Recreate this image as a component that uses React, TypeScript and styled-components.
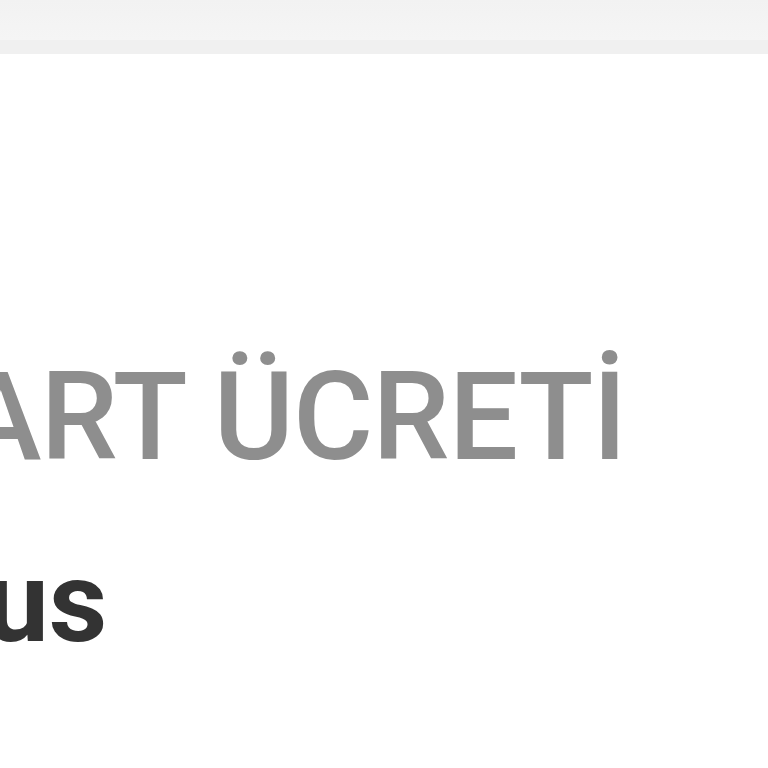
import styled, { createGlobalStyle } from "styled-components";

const GlobalStyle = createGlobalStyle`
    html, body {
        margin: 0;
        padding: 0;
        background: #ffffff;
        overflow: hidden;
    }
    body {
        font-family: Roboto, "Liberation Sans", Arial, sans-serif;
    }
`;

const Page = styled.div`
    width: 768px;
    height: 768px;
    display: flex;
    flex-direction: column;
    overflow: hidden;
`;

const TopBar = styled.div`
    height: 40px;
    background: linear-gradient(#f2f2f2, #f5f5f5);
    border-bottom: 14px solid #f0f0f0;
`;

const Content = styled.div`
    display: flex;
    flex-direction: column;
    padding-top: 302px;
    margin-left: -40px;
`;

const Label = styled.div`
    font-size: 123px;
    line-height: 1;
    font-weight: 500;
    color: #8e8e8e;
    white-space: nowrap;
    letter-spacing: -1px;
`;

const Value = styled.div`
    margin-top: 66px;
    font-size: 114px;
    line-height: 1;
    font-weight: 700;
    color: #333333;
    white-space: nowrap;
    margin-left: -176px;
`;

export default function App() {
    return (
        <Page>
            <GlobalStyle />
            <TopBar />
            <Content>
                <Label>ART ÜCRETİ</Label>
                <Value>Bonus</Value>
            </Content>
        </Page>
    );
}
